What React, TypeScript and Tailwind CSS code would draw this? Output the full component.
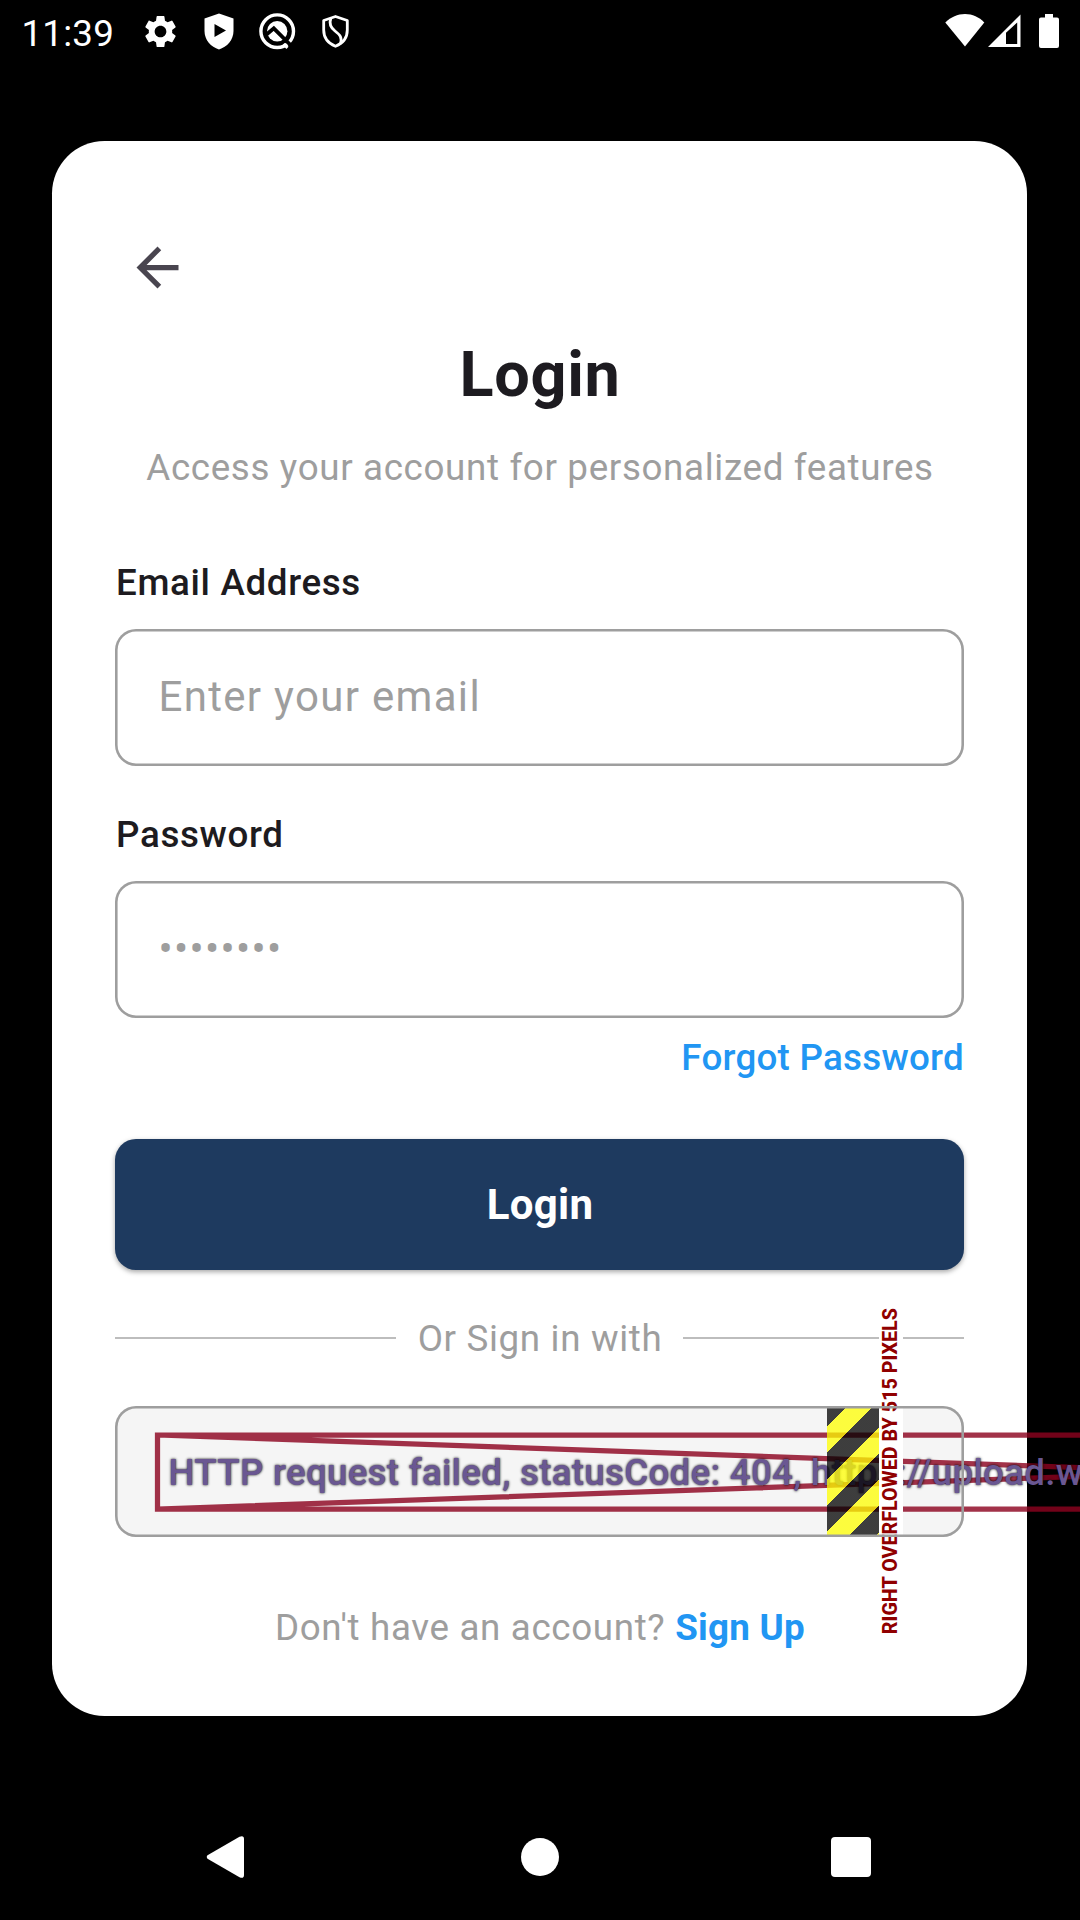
import React from "react";
import { MdSettings, MdArrowBack } from "react-icons/md";

function StatusBar() {
  return (
    <header className="flex h-[63px] items-start justify-between text-white">
      <div className="flex items-start">
        <span className="ml-[21.5px] mt-[11.5px] w-[100px] text-[36.75px] leading-[44px] tracking-[0.2px]">11:39</span>
        <MdSettings className="ml-[19px] mt-[12px] size-[39px]" />
        <svg className="ml-[24px] mt-[13px] h-[37px] w-[30px]" viewBox="0 0 30 37" fill="currentColor">
          <path
            fillRule="evenodd"
            d="M15 0.5 L29.5 5.5 V18 C29.5 27 23 34 15 36.5 C7 34 0.5 27 0.5 18 V5.5 Z M10.5 11 V24 L22 17.5 Z"
          />
        </svg>
        <svg className="ml-[25px] mt-[13px] size-[37px]" viewBox="0 0 37 37" fill="none">
          <circle cx="18.2" cy="18.2" r="16.3" stroke="white" strokeWidth="3.4" />
          <circle cx="18.2" cy="18.2" r="10.2" fill="white" />
          <path d="M7.500 21.500 L14.800 15.400 L33 33.500" stroke="black" strokeWidth="3.8" />
          <path d="M24.500 31 L28.500 34.800" stroke="white" strokeWidth="3" />
        </svg>
        <svg className="ml-[26px] mt-[15px] h-[33px] w-[27px]" viewBox="0 0 27 33" fill="none" stroke="white">
          <path d="M13.5 1.5 L25.3 5.5 V15 C25.3 23 20.5 28.5 13.5 31.3 C6.5 28.5 1.7 23 1.7 15 V5.5 Z" strokeWidth="2.8" strokeLinejoin="round" />
          <path d="M8.8 3.5 C6.8 9 8.5 12.5 13 16 C18 19.8 20.3 22 18.500 29" strokeWidth="2.8" />
        </svg>
      </div>
      <div className="flex items-start pr-[21px]">
        <svg className="mt-[14px] h-[33px] w-[40px]" viewBox="0 0 40 33" fill="currentColor">
          <path d="M20 32.5 L0.3 8.5 C6 3 12.500 0 20 0 C27.500 0 34 3 39.300 8.500 Z" />
        </svg>
        <svg className="ml-[3px] mt-[14px] size-[33px]" viewBox="0 0 33 33" fill="currentColor">
          <path fillRule="evenodd" d="M0 33 L32.500 0.500 V33 Z M18 18.700 V30 H29.200 V8.500 Z" />
        </svg>
        <svg className="ml-[18px] mt-[14px] h-[34px] w-[20px]" viewBox="0 0 20 34" fill="currentColor">
          <path d="M6 0 H14 V3.500 H18 Q20 3.500 20 5.500 V32 Q20 34 18 34 H2 Q0 34 0 32 V5.500 Q0 3.500 2 3.500 H6 Z" />
        </svg>
      </div>
    </header>
  );
}

function Field({ label, placeholder, className }: { label: string; placeholder: string; className: string }) {
  return (
    <label className={`block ${className}`}>
      <span className="block pl-[1px] text-[36.75px] font-medium leading-[52px] tracking-[0.656px] text-[#1d1b20]">
        {label}
      </span>
      <div className="mt-[20px] flex h-[137px] items-center rounded-[21px] pl-[43.5px] pr-[42px] pb-[2px] shadow-[inset_0_0_0_2.6px_#9e9e9e]">
        <input
          className="w-full bg-transparent text-[42px] leading-[63px] tracking-[1.3125px] outline-none placeholder:text-[#9e9e9e] placeholder:opacity-100"
          placeholder={placeholder}
        />
      </div>
    </label>
  );
}

function OverflowStripe() {
  return (
    <div className="absolute left-[712px] top-0 flex h-[131px] items-center">
      <div className="h-full w-[52px] bg-[repeating-linear-gradient(135deg,#000000bf_0_14.6px,#ffff00bf_14.6px_33.16px,#000000bf_33.16px_37.12px)]" />
      <span className="rotate-180 whitespace-nowrap bg-white text-[19.69px] font-extrabold leading-[24px] text-[#900000] [writing-mode:vertical-rl]">
        RIGHT OVERFLOWED BY 515 PIXELS
      </span>
    </div>
  );
}

function SocialButton() {
  return (
    <div className="relative h-[131px] rounded-[21px] bg-[#f5f5f5]">
      <svg className="absolute left-[39px] top-[26px] h-[80px] w-[940px]" viewBox="0 0 940 80" fill="none">
        <path
          d="M3.500 3 H2095 V77 H3.500 Z M3.500 3 L2095 77 M2095 3 L3.500 77"
          stroke="#8d021f"
          strokeOpacity="0.812"
          strokeWidth="5.25"
        />
      </svg>
      <span className="absolute left-[53.5px] top-[41px] whitespace-nowrap text-[36.75px] font-medium leading-[52px] tracking-[0.2625px] text-[#6a5792] [text-shadow:0_0_2.6px_#000]">
        HTTP request failed, statusCode: 404, https://upload.w
      </span>
      <OverflowStripe />
      <div className="absolute inset-0 rounded-[21px] shadow-[inset_0_0_0_2.6px_#9e9e9e]" />
    </div>
  );
}

export default function App() {
  return (
    <div className="flex h-[1920px] w-[1080px] flex-col overflow-hidden bg-black font-[Roboto,sans-serif]">
      <StatusBar />
      <main className="ml-[52px] mt-[78px] h-[1575px] w-[975px] shrink-0 rounded-[52.5px] bg-white px-[63px] pt-[63px]">
        <button className="flex h-[126px] items-center pl-[11px] text-[#49454f]">
          <MdArrowBack className="size-[63px]" />
        </button>
        <h1 className="pl-[1px] text-center text-[63px] font-bold leading-[90px] tracking-[0.656px] text-[#1d1b20]">
          Login
        </h1>
        <p className="mt-[22px] whitespace-nowrap pl-[1px] text-center text-[36.75px] leading-[52px] tracking-[0.656px] text-[#9e9e9e]">
          Access your account for personalized features
        </p>
        <Field label="Email Address" placeholder="Enter your email" className="mt-[63px]" />
        <Field label="Password" placeholder="••••••••" className="mt-[43px]" />
        <div className="mt-[14px] flex justify-end">
          <a className="text-[36.75px] font-medium leading-[52px] tracking-[0.2625px] text-[#2196f3]">Forgot Password</a>
        </div>
        <button className="mt-[55px] flex h-[131px] w-full items-center justify-center rounded-[21px] bg-[#1e3a5f] pl-[1px] text-[42px] font-bold tracking-[0.2625px] text-white shadow-[0_2px_5px_rgba(0,0,0,0.35)]">
          Login
        </button>
        <div className="mt-[43px] flex items-center gap-[21px]">
          <div className="mb-[2px] h-[2px] flex-1 bg-[#bdbdbd]" />
          <span className="pl-[1px] text-[36.75px] leading-[52px] tracking-[0.656px] text-[#9e9e9e]">Or Sign in with</span>
          <div className="mb-[2px] h-[2px] flex-1 bg-[#bdbdbd]" />
        </div>
        <div className="mt-[41px]">
          <SocialButton />
        </div>
        <p className="mt-[65px] pl-[1px] text-center text-[36.75px] leading-[52px] tracking-[0.656px] text-[#9e9e9e]">
          Don't have an account? <a className="font-bold tracking-[0.2625px] text-[#2196f3]">Sign Up</a>
        </p>
      </main>
      <nav className="mt-[78px] flex h-[126px] shrink-0 items-center pl-[206px] text-white">
        <svg className="h-[42px] w-[38px]" viewBox="0 0 38 42" fill="currentColor">
          <path d="M1.500 19.300 L33.500 0.700 Q38 -1 38 3 V39 Q38 43 33.500 41.300 L1.500 22.700 Q0 21 1.500 19.300 Z" />
        </svg>
        <div className="ml-[277px] size-[38px] rounded-full bg-white" />
        <div className="ml-[272px] size-[40px] rounded-[4px] bg-white" />
      </nav>
    </div>
  );
}
